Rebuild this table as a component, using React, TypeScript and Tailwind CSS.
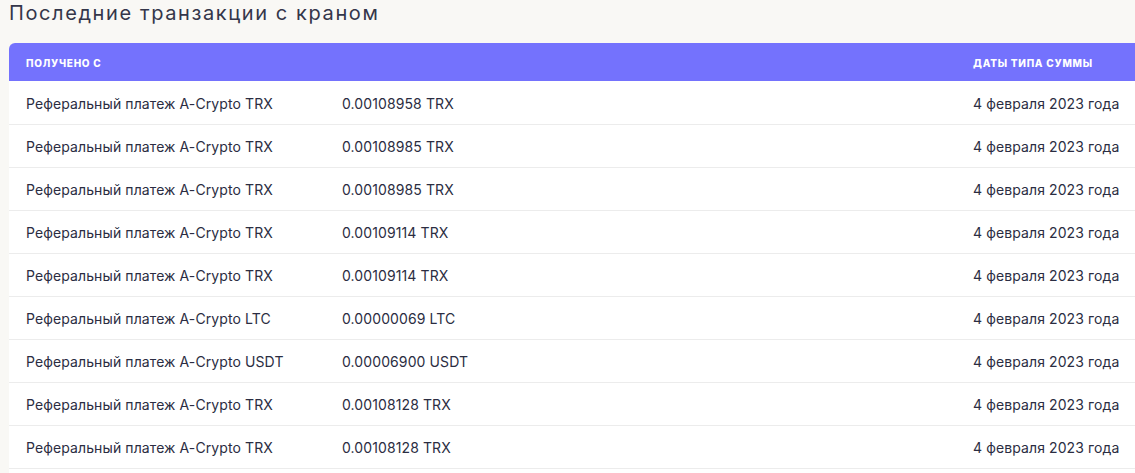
const rows = [
  { from: "Реферальный платеж A-Crypto TRX", amount: "0.00108958 TRX" },
  { from: "Реферальный платеж A-Crypto TRX", amount: "0.00108985 TRX" },
  { from: "Реферальный платеж A-Crypto TRX", amount: "0.00108985 TRX" },
  { from: "Реферальный платеж A-Crypto TRX", amount: "0.00109114 TRX" },
  { from: "Реферальный платеж A-Crypto TRX", amount: "0.00109114 TRX" },
  { from: "Реферальный платеж A-Crypto LTC", amount: "0.00000069 LTC" },
  { from: "Реферальный платеж A-Crypto USDT", amount: "0.00006900 USDT" },
  { from: "Реферальный платеж A-Crypto TRX", amount: "0.00108128 TRX" },
  { from: "Реферальный платеж A-Crypto TRX", amount: "0.00108128 TRX" },
];

export default function App() {
  return (
    <div
      className="h-[473px] overflow-hidden bg-[#f9f8f5] pl-[9px]"
      style={{ fontFamily: "Inter, 'Noto Sans', sans-serif" }}
    >
      <h2 className="h-[43px] pt-[1px] text-[20px] leading-[24px] font-normal tracking-[1.6px] text-[#34364a]">
        Последние транзакции с краном
      </h2>
      <div className="overflow-hidden rounded-tl-[6px] bg-white">
        <table className="w-full border-collapse text-left">
          <thead>
            <tr className="h-[38px] bg-[#7472fd] text-[10px] font-extrabold uppercase tracking-[0.75px] text-white">
              <th className="w-[316px] pl-[17px] pt-[2px] font-extrabold">получено с</th>
              <th className="pl-[17px]"></th>
              <th className="w-[179px] pl-[17px] pt-[2px] font-extrabold">даты типа суммы</th>
            </tr>
          </thead>
          <tbody className="text-[14px] tracking-[0.1px] text-[#2b2d42]">
            {rows.map((r, i) => (
              <tr key={i} className="h-[43px] border-b border-[#ececec]">
                <td className="pl-[17px] pt-[2px]">{r.from}</td>
                <td className="pl-[17px] pt-[2px]">{r.amount}</td>
                <td className="pl-[17px] pt-[2px] whitespace-nowrap">4 февраля 2023 года</td>
              </tr>
            ))}
          </tbody>
        </table>
        <div className="h-[10px]"></div>
      </div>
    </div>
  );
}
